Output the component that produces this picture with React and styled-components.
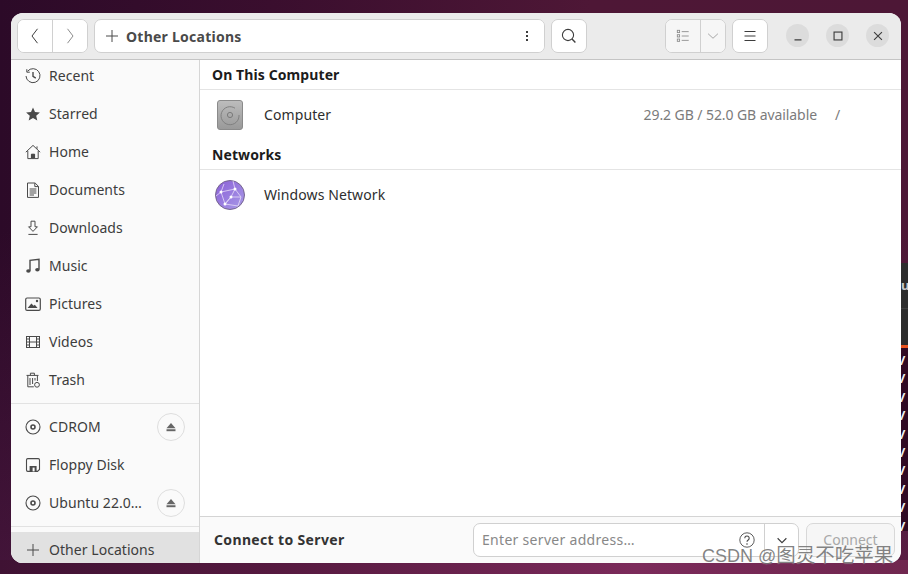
import React from 'react';
import styled, { createGlobalStyle } from 'styled-components';

const GlobalStyle = createGlobalStyle`
	html, body {
		margin: 0;
		height: 100%;
		overflow: hidden;
	}
	body {
		font-family: 'Noto Sans', 'Open Sans', sans-serif;
		font-size: 14px;
		color: #3d3d3d;
	}
`;

const Desktop = styled.div`
	position: relative;
	width: 908px;
	height: 574px;
	padding: 13px 7px 11px 11px;
	box-sizing: border-box;
	overflow: hidden;
	background:
		radial-gradient(ellipse 260px 60px at 560px 590px, #86305f 0%, rgba(134, 48, 95, 0) 100%),
		linear-gradient(180deg, rgba(60, 20, 60, 0) 40%, rgba(110, 40, 90, 0.35) 100%),
		linear-gradient(90deg, #2c0a28 0%, #3a0e2e 30%, #4e1736 65%, #4d1736 100%);
`;

const BottomGlow = styled.div`
	position: absolute;
	left: 0;
	right: 0;
	bottom: 0;
	height: 14px;
	background: linear-gradient(90deg, #3f1233 0%, #55193f 30%, #7b2a5a 70%, #70274f 100%);
`;

const TerminalPeek = styled.div`
	position: absolute;
	top: 263px;
	right: 0;
	width: 7px;
	height: 268px;
	background: #300a24;
	display: flex;
	flex-direction: column;
	overflow: hidden;
`;

const TerminalTitle = styled.div`
	height: 46px;
	flex: none;
	box-sizing: border-box;
	background: #2c2c2c;
	border-bottom: 1px solid #3e3e3e;
	color: #c8c8c8;
	font-size: 13px;
	line-height: 44px;
	font-weight: 700;
`;

const TerminalTabs = styled.div`
	height: 39px;
	flex: none;
	box-sizing: border-box;
	background: #2c2c2c;
	border-bottom: 3px solid #e95420;
`;

const TerminalTicks = styled.div`
	color: #f0f0f0;
	font-size: 13px;
	font-weight: 700;
	line-height: 18.4px;
	padding-top: 3px;
	margin-left: -1px;
`;

const Window = styled.div`
	position: relative;
	width: 890px;
	height: 550px;
	border-radius: 12px;
	overflow: hidden;
	background: #ffffff;
	display: flex;
	flex-direction: column;
`;

const HeaderBar = styled.header`
	height: 47px;
	flex: none;
	box-sizing: border-box;
	border-bottom: 1px solid #c4c4c4;
	background: #ebebeb;
	display: flex;
	align-items: flex-start;
	padding: 6px 0 0 6px;
`;

const ButtonGroup = styled.div`
	display: flex;
	height: 34px;
	width: ${(p) => (p.$w ? `${p.$w}px` : 'auto')};
	box-sizing: border-box;
	border: 1px solid #d0d0d0;
	border-radius: 7px;
	overflow: hidden;
	background: #ffffff;
	margin-left: ${(p) => p.$gap || 0}px;
`;

const HeadButton = styled.div`
	width: ${(p) => p.$w || 34}px;
	flex: none;
	display: flex;
	align-items: center;
	justify-content: center;
	color: ${(p) => (p.$dim ? '#8c8c8c' : '#3d3d3d')};
	background: ${(p) => (p.$muted ? '#f6f6f6' : '#ffffff')};
	& + & {
		border-left: 1px solid #d0d0d0;
	}
`;

const PathField = styled.div`
	flex: 1;
	display: flex;
	align-items: center;
	gap: 6px;
	padding-left: 9px;
	font-weight: 700;
	font-size: 14px;
	letter-spacing: 0.25px;
	color: #4a4a4a;
`;

const WindowButtons = styled.div`
	display: flex;
	gap: 17px;
	margin-left: 18px;
	margin-top: 5px;
`;

const WindowButton = styled.div`
	width: 23px;
	height: 23px;
	border-radius: 50%;
	background: #dcdcdc;
	display: flex;
	align-items: center;
	justify-content: center;
	color: #3d3d3d;
`;

const Body = styled.div`
	flex: 1;
	min-height: 0;
	display: flex;
	overflow: hidden;
`;

const Sidebar = styled.nav`
	width: 189px;
	flex: none;
	box-sizing: border-box;
	border-right: 1px solid #d6d6d6;
	background: #fafafa;
	overflow: hidden;
`;

// the list in the reference is scrolled a little, its first row starts under the header
const SideList = styled.div`
	margin-top: -3px;
`;

const SideRow = styled.div`
	height: ${(p) => (p.$active ? 36 : 38)}px;
	display: flex;
	align-items: center;
	padding: 0 14px;
	gap: 8px;
	color: #3d3d3d;
	background: ${(p) => (p.$active ? '#e1e1e1' : 'transparent')};
`;

const SideIcon = styled.span`
	width: 16px;
	height: 16px;
	flex: none;
	color: #4a4a4a;
	display: flex;
`;

const SideLabel = styled.span`
	flex: 1;
	white-space: nowrap;
	font-size: 14px;
	letter-spacing: 0.05px;
	padding-bottom: 2px;
`;

const Eject = styled.span`
	width: 28px;
	height: 28px;
	flex: none;
	box-sizing: border-box;
	border: 1px solid #dedede;
	border-radius: 50%;
	display: flex;
	align-items: center;
	justify-content: center;
	color: #666;
`;

const SideSeparator = styled.div`
	height: 1px;
	background: #e2e2e2;
	margin: ${(p) => p.$m || '4px 0 4px'};
`;

const Main = styled.main`
	flex: 1;
	min-width: 0;
	display: flex;
	flex-direction: column;
`;

const Places = styled.div`
	flex: 1;
	min-height: 0;
`;

const SectionTitle = styled.div`
	height: ${(p) => p.$h}px;
	box-sizing: border-box;
	border-bottom: 1px solid #e4e4e4;
	display: flex;
	align-items: flex-end;
	padding: 0 0 5px 12px;
	font-weight: 700;
	font-size: 14px;
	letter-spacing: 0.1px;
	color: #1c1c1c;
`;

const PlaceRow = styled.div`
	height: 50px;
	display: flex;
	align-items: center;
	padding-left: 14px;
	color: #2e2e2e;
`;

const PlaceIcon = styled.span`
	width: 32px;
	height: 32px;
	flex: none;
	margin-right: 18px;
	display: flex;
`;

const PlaceName = styled.span`
	flex: 1;
	font-size: 14px;
	letter-spacing: 0.1px;
	padding-bottom: 2px;
`;

const PlaceInfo = styled.span`
	color: #7b7b7b;
	font-size: 14px;
	letter-spacing: -0.08px;
	padding-bottom: 2px;
`;

const PlaceMount = styled.span`
	color: #7b7b7b;
	width: 84px;
	box-sizing: border-box;
	padding: 0 0 2px 18px;
`;

const ConnectBar = styled.div`
	height: 47px;
	flex: none;
	box-sizing: border-box;
	border-top: 1px solid #d4d4d4;
	background: #fafafa;
	display: flex;
	align-items: flex-start;
	padding: 6px 6px 0 14px;
`;

const ConnectTitle = styled.div`
	flex: 1;
	font-weight: 700;
	font-size: 14px;
	line-height: 34px;
	letter-spacing: 0.35px;
	color: #333;
`;

const AddressField = styled.div`
	width: 326px;
	height: 34px;
	box-sizing: border-box;
	border: 1px solid #d0d0d0;
	border-radius: 7px;
	background: #ffffff;
	display: flex;
	align-items: center;
	padding-left: 8px;
	color: #888;
	font-size: 14px;
	letter-spacing: 0.3px;
`;

const AddressText = styled.span`
	flex: 1;
	padding-bottom: 2px;
`;

const AddressDrop = styled.span`
	width: 34px;
	height: 100%;
	flex: none;
	margin-left: 9px;
	box-sizing: border-box;
	border-left: 1px solid #d0d0d0;
	display: flex;
	align-items: center;
	justify-content: center;
	color: #3d3d3d;
`;

const ConnectButton = styled.div`
	width: 89px;
	height: 34px;
	margin-left: 7px;
	box-sizing: border-box;
	border: 1px solid #d8d8d8;
	border-radius: 7px;
	background: #f6f6f6;
	color: #a8a8a8;
	display: flex;
	align-items: center;
	justify-content: center;
	font-size: 14px;
	padding-bottom: 2px;
`;

const Watermark = styled.div`
	position: absolute;
	left: 702px;
	top: 544px;
	font-family: 'Liberation Sans', 'Noto Sans CJK SC', sans-serif;
	font-size: 18px;
	line-height: 22px;
	white-space: nowrap;
	color: rgba(90, 90, 90, 0.75);
	text-shadow: 0 0 1px rgba(255, 255, 255, 0.6);
`;

const WatermarkName = styled.span`
	font-size: 19.5px;
`;

const Icon = ({ size = 16, children }) => (
	<svg
		width={size}
		height={size}
		viewBox="0 0 16 16"
		fill="none"
		stroke="currentColor"
		strokeWidth="1"
		style={{ display: 'block' }}
	>
		{children}
	</svg>
);

const PlusIcon = () => (
	<Icon>
		<path d="M8 2v12M2 8h12" />
	</Icon>
);

const RecentIcon = () => (
	<Icon>
		<path d="M2.6 3.2A7 7 0 1 1 1 8" />
		<path d="M1.8 1.2v3h3" />
		<path d="M8 4v4.4l2.8 1.8" strokeWidth="1.4" />
	</Icon>
);

const StarIcon = () => (
	<Icon>
		<path
			d="M8 1.4l2 4.5 4.9.5-3.7 3.3 1.1 4.9L8 12.1l-4.3 2.5 1.1-4.9L1.1 6.4 6 5.9z"
			fill="currentColor"
			stroke="none"
		/>
	</Icon>
);

const HomeIcon = () => (
	<Icon>
		<path d="M.8 8.2L8 1.4l7.2 6.8" />
		<path d="M2.8 7v7.6h3.6v-4.4h3.2v4.4h3.6V7" />
		<path d="M6.6 14.6v-4h2.8v4z" fill="currentColor" />
		<path d="M12 2.4v2.4" />
	</Icon>
);

const DocumentIcon = () => (
	<Icon>
		<path d="M2.5 1h7.6l3.4 3.4v11H2.5z" />
		<path d="M9.8 1.2v3.4h3.6" />
		<path d="M4.6 7h6.8M4.6 9h6.8M4.6 11h6.8M4.6 13h4.4" />
	</Icon>
);

const DownloadIcon = () => (
	<Icon>
		<path d="M6 1.2h4v5.6h2.4L8 11.4 3.6 6.8H6z" />
		<path d="M3.4 14.4h9.2" />
	</Icon>
);

const MusicIcon = () => (
	<Icon>
		<path d="M5 12.8V2.4l9-1.2v10.2" strokeWidth="1.4" />
		<ellipse cx="3.4" cy="13" rx="2.2" ry="1.8" fill="currentColor" stroke="none" />
		<ellipse cx="12.4" cy="11.8" rx="2.2" ry="1.8" fill="currentColor" stroke="none" />
	</Icon>
);

const PictureIcon = () => (
	<Icon>
		<rect x="0.7" y="2" width="14.6" height="12.4" rx="1.4" strokeWidth="1.2" />
		<path d="M2.6 12l3.8-4.4 2.2 2.2 1.2-1 2.8 3.2z" fill="currentColor" stroke="none" />
		<circle cx="12" cy="5" r="1.2" fill="currentColor" stroke="none" />
	</Icon>
);

const VideoIcon = () => (
	<Icon>
		<rect x="1.5" y="2.5" width="13" height="11" />
		<path d="M4.5 2.5v11M11.5 2.5v11M4.5 8h7M1.5 5h3M1.5 8h3M1.5 11h3M11.5 5h3M11.5 8h3M11.5 11h3" />
	</Icon>
);

const TrashIcon = () => (
	<Icon>
		<path d="M1.5 3.4h12M5.4 3.2V1.2h4v2" />
		<path d="M2.8 3.6v11.2h6" />
		<path d="M12.4 3.6V9" />
		<path d="M5 6v7M7.6 6v6M10 6v2.5" />
		<circle cx="12" cy="12.8" r="2.4" />
	</Icon>
);

const DiscIcon = () => (
	<Icon>
		<circle cx="8" cy="8" r="7" strokeWidth="1.1" />
		<circle cx="8" cy="8" r="2" strokeWidth="1.6" />
	</Icon>
);

const FloppyIcon = () => (
	<Icon>
		<path d="M2.8 1.6h10.4a1.4 1.4 0 0 1 1.3 1.4v9.4l-2 2H2.8a1.4 1.4 0 0 1-1.3-1.4V3a1.4 1.4 0 0 1 1.3-1.4z" strokeWidth="1.1" />
		<path d="M4.6 14.4V9h7v5.4z" fill="currentColor" stroke="none" />
		<rect x="7.6" y="10.6" width="2" height="3.8" fill="#fafafa" stroke="none" />
	</Icon>
);

const EjectIcon = () => (
	<Icon size={12}>
		<path d="M8 2.5l6 7H2z" fill="currentColor" stroke="none" />
		<rect x="2" y="11" width="12" height="2.6" fill="currentColor" stroke="none" />
	</Icon>
);

const DriveIcon = () => (
	<svg width="32" height="32" viewBox="0 0 32 32" style={{ display: 'block' }}>
		<defs>
			<linearGradient id="driveFill" x1="0" y1="0" x2="0" y2="1">
				<stop offset="0" stopColor="#bdbdbd" />
				<stop offset="1" stopColor="#999999" />
			</linearGradient>
		</defs>
		<rect x="3.5" y="1.5" width="25" height="29" rx="2.5" fill="url(#driveFill)" stroke="#8a8a8a" />
		<path d="M21 9.2A9 9 0 1 0 25 16" fill="none" stroke="#808080" strokeWidth="1" />
		<circle cx="16" cy="16" r="2.6" fill="none" stroke="#7a7a7a" strokeWidth="1" />
	</svg>
);

const GlobeIcon = () => (
	<svg width="32" height="32" viewBox="0 0 32 32" style={{ display: 'block' }}>
		<defs>
			<linearGradient id="globeFill" x1="0" y1="0" x2="1" y2="1">
				<stop offset="0" stopColor="#8a5fd6" />
				<stop offset="1" stopColor="#a99be8" />
			</linearGradient>
		</defs>
		<circle cx="16" cy="16" r="14.5" fill="url(#globeFill)" stroke="#77678f" />
		<g stroke="#e6dcf8" strokeWidth="0.8" fill="none">
			<path d="M7 13L21 10 27 18 17 18 11 25 7 13" />
			<path d="M21 10L17 18 11 25 24 27 27 18M21 10L19 2M7 13L10 5M7 13L2 17" />
		</g>
		<g fill="#ffffff">
			<circle cx="7" cy="13" r="1.5" />
			<circle cx="21" cy="10" r="1.5" />
			<circle cx="17" cy="18" r="1.5" />
			<circle cx="11" cy="25" r="1.5" />
		</g>
	</svg>
);

const sidePlaces = [
	['Recent', RecentIcon],
	['Starred', StarIcon],
	['Home', HomeIcon],
	['Documents', DocumentIcon],
	['Downloads', DownloadIcon],
	['Music', MusicIcon],
	['Pictures', PictureIcon],
	['Videos', VideoIcon],
	['Trash', TrashIcon],
];

const sideDevices = [
	['CDROM', DiscIcon, true],
	['Floppy Disk', FloppyIcon, false],
	['Ubuntu 22.0…', DiscIcon, true],
];

const App = () => {
	return (
		<Desktop>
			<GlobalStyle />
			<BottomGlow />
			<TerminalPeek>
				<TerminalTitle>u</TerminalTitle>
				<TerminalTabs />
				<TerminalTicks>
					{Array.from({ length: 10 }, (_, i) => (
						<div key={i}>/</div>
					))}
				</TerminalTicks>
			</TerminalPeek>
			<Window>
				<HeaderBar>
					<ButtonGroup>
						<HeadButton>
							<Icon>
								<path d="M10.5 .8L5 8l5.5 7.2" />
							</Icon>
						</HeadButton>
						<HeadButton $dim>
							<Icon>
								<path d="M5.5 .8L11 8l-5.5 7.2" />
							</Icon>
						</HeadButton>
					</ButtonGroup>
					<ButtonGroup $gap={6} $w={451}>
						<PathField>
							<PlusIcon />
							Other Locations
						</PathField>
						<HeadButton>
							<Icon>
								<path d="M8 3v2M8 7v2M8 11v2" strokeWidth="2" />
							</Icon>
						</HeadButton>
					</ButtonGroup>
					<ButtonGroup $gap={6}>
						<HeadButton>
							<Icon>
								<circle cx="7" cy="7" r="5.6" strokeWidth="1.1" />
								<path d="M11 11l3.4 3.4" strokeWidth="1.4" />
							</Icon>
						</HeadButton>
					</ButtonGroup>
					<ButtonGroup $gap={78}>
						<HeadButton $muted $dim>
							<Icon size={14}>
								<path d="M6.5 3h8M6.5 8h8M6.5 13h8" />
								<rect x="1.5" y="1.5" width="2.6" height="2.6" />
								<rect x="1.5" y="6.5" width="2.6" height="2.6" />
								<rect x="1.5" y="11.5" width="2.6" height="2.6" />
							</Icon>
						</HeadButton>
						<HeadButton $w={24} $muted $dim>
							<Icon size={12}>
								<path d="M1.5 5l6.5 6 6.5-6" />
							</Icon>
						</HeadButton>
					</ButtonGroup>
					<ButtonGroup $gap={6}>
						<HeadButton>
							<Icon>
								<path d="M2.5 3.5h11M2.5 8h11M2.5 12.5h11" />
							</Icon>
						</HeadButton>
					</ButtonGroup>
					<WindowButtons>
						<WindowButton>
							<Icon size={14}>
								<path d="M4 12.5h8" strokeWidth="1.3" />
							</Icon>
						</WindowButton>
						<WindowButton>
							<Icon size={14}>
								<rect x="3.5" y="3.5" width="9" height="9" strokeWidth="1.3" />
							</Icon>
						</WindowButton>
						<WindowButton>
							<Icon size={14}>
								<path d="M3.5 3.5l9 9M12.5 3.5l-9 9" strokeWidth="1.3" />
							</Icon>
						</WindowButton>
					</WindowButtons>
				</HeaderBar>
				<Body>
					<Sidebar>
						<SideList>
							{sidePlaces.map(([label, Glyph]) => (
								<SideRow key={label}>
									<SideIcon>
										<Glyph />
									</SideIcon>
									<SideLabel>{label}</SideLabel>
								</SideRow>
							))}
							<SideSeparator />
							{sideDevices.map(([label, Glyph, eject]) => (
								<SideRow key={label}>
									<SideIcon>
										<Glyph />
									</SideIcon>
									<SideLabel>{label}</SideLabel>
									{eject && (
										<Eject>
											<EjectIcon />
										</Eject>
									)}
								</SideRow>
							))}
							<SideSeparator $m="4px 0 5px" />
							<SideRow $active>
								<SideIcon>
									<PlusIcon />
								</SideIcon>
								<SideLabel>Other Locations</SideLabel>
							</SideRow>
						</SideList>
					</Sidebar>
					<Main>
						<Places>
							<SectionTitle $h={30}>On This Computer</SectionTitle>
							<PlaceRow>
								<PlaceIcon>
									<DriveIcon />
								</PlaceIcon>
								<PlaceName>Computer</PlaceName>
								<PlaceInfo>29.2 GB / 52.0 GB available</PlaceInfo>
								<PlaceMount>/</PlaceMount>
							</PlaceRow>
							<SectionTitle $h={30}>Networks</SectionTitle>
							<PlaceRow>
								<PlaceIcon>
									<GlobeIcon />
								</PlaceIcon>
								<PlaceName>Windows Network</PlaceName>
							</PlaceRow>
						</Places>
						<ConnectBar>
							<ConnectTitle>Connect to Server</ConnectTitle>
							<AddressField>
								<AddressText>Enter server address…</AddressText>
								<Icon>
									<circle cx="8" cy="8" r="7.2" stroke="#4a4a4a" strokeWidth="0.9" />
									<path d="M5.8 6.2a2.2 2.2 0 1 1 3.4 1.8c-.8.5-1.2 1-1.2 1.8" stroke="#4a4a4a" strokeWidth="1.1" />
									<circle cx="8" cy="12" r="0.8" fill="#4a4a4a" stroke="none" />
								</Icon>
								<AddressDrop>
									<Icon size={14}>
										<path d="M3 6l5 5 5-5" strokeWidth="1.3" />
									</Icon>
								</AddressDrop>
							</AddressField>
							<ConnectButton>Connect</ConnectButton>
						</ConnectBar>
					</Main>
				</Body>
			</Window>
			<Watermark>
				CSDN @<WatermarkName>图灵不吃苹果</WatermarkName>
			</Watermark>
		</Desktop>
	);
};

export default App;
